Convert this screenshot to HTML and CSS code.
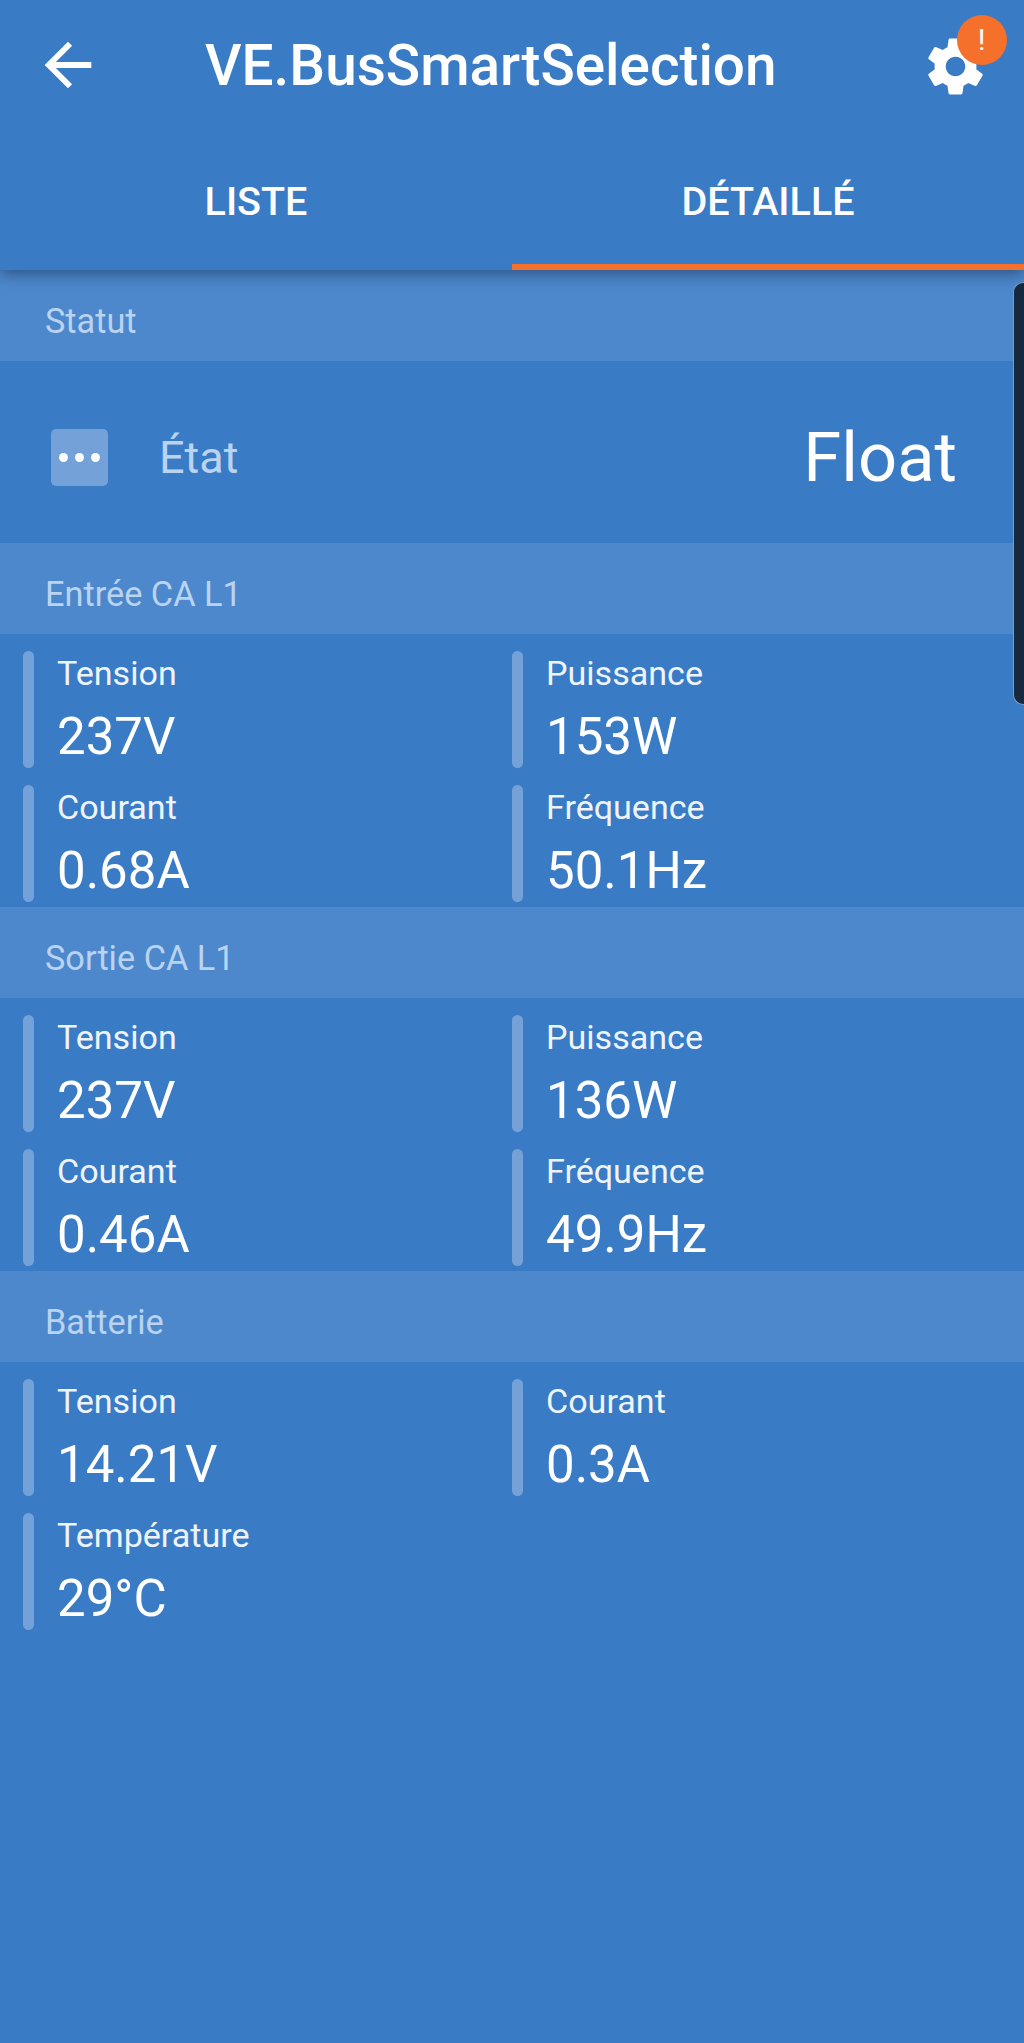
FILE: index.html
```html
<!DOCTYPE html>
<html lang="fr">

<head>
    <meta charset="UTF-8">
    <meta name="viewport" content="width=device-width, initial-scale=1.0">
    <title>VE.BusSmartSelection</title>
    <link rel="stylesheet" href="styles.css">
</head>

<body>
    <header class="appbar">
        <div class="toolbar">
            <svg class="back-icon" viewBox="0 0 24 24"><path d="M20 11H7.83l5.59-5.59L12 4l-8 8 8 8 1.41-1.41L7.83 13H20v-2z"/></svg>
            <h1 class="title">VE.BusSmartSelection</h1>
            <div class="settings">
                <svg class="gear-icon" viewBox="0 0 24 24"><path fill-rule="evenodd" d="M19.43 12.98c.04-.32.07-.64.07-.98s-.03-.66-.07-.98l2.11-1.65c.19-.15.24-.42.12-.64l-2-3.46c-.12-.22-.39-.3-.61-.22l-2.49 1c-.52-.4-1.08-.73-1.69-.98l-.38-2.65C14.46 2.18 14.25 2 14 2h-4c-.25 0-.46.18-.49.42l-.38 2.65c-.61.25-1.17.59-1.69.98l-2.49-1c-.23-.09-.49 0-.61.22l-2 3.46c-.13.22-.07.49.12.64l2.11 1.65c-.04.32-.07.65-.07.98s.03.66.07.98l-2.11 1.65c-.19.15-.24.42-.12.64l2 3.46c.12.22.39.3.61.22l2.49-1c.52.4 1.08.73 1.69.98l.38 2.65c.03.24.24.42.49.42h4c.25 0 .46-.18.49-.42l.38-2.65c.61-.25 1.17-.59 1.69-.98l2.49 1c.23.09.49 0 .61-.22l2-3.46c.12-.22.07-.49-.12-.64l-2.11-1.65zM12 15.5c-1.93 0-3.5-1.57-3.5-3.5s1.57-3.5 3.5-3.5 3.5 1.57 3.5 3.5-1.57 3.5-3.5 3.5z"/></svg>
                <span class="badge">!</span>
            </div>
        </div>
        <nav class="tabs">
            <div class="tab">LISTE</div>
            <div class="tab active">DÉTAILLÉ</div>
        </nav>
    </header>

    <main>
        <div class="section-title">Statut</div>
        <div class="status-row">
            <span class="status-icon"><i></i><i></i><i></i></span>
            <span class="status-label">État</span>
            <span class="status-value">Float</span>
        </div>

        <div class="section-title">Entrée CA L1</div>
        <div class="grid">
            <div class="cell"><div class="label">Tension</div><div class="value">237V</div></div>
            <div class="cell"><div class="label">Puissance</div><div class="value">153W</div></div>
            <div class="cell"><div class="label">Courant</div><div class="value">0.68A</div></div>
            <div class="cell"><div class="label">Fréquence</div><div class="value">50.1Hz</div></div>
        </div>

        <div class="section-title">Sortie CA L1</div>
        <div class="grid">
            <div class="cell"><div class="label">Tension</div><div class="value">237V</div></div>
            <div class="cell"><div class="label">Puissance</div><div class="value">136W</div></div>
            <div class="cell"><div class="label">Courant</div><div class="value">0.46A</div></div>
            <div class="cell"><div class="label">Fréquence</div><div class="value">49.9Hz</div></div>
        </div>

        <div class="section-title">Batterie</div>
        <div class="grid">
            <div class="cell"><div class="label">Tension</div><div class="value">14.21V</div></div>
            <div class="cell"><div class="label">Courant</div><div class="value">0.3A</div></div>
            <div class="cell"><div class="label">Température</div><div class="value">29°C</div></div>
        </div>
    </main>

    <div class="edge-handle"></div>
</body>

</html>
```

FILE: styles.css
```css
body {
    margin: 0;
    height: 2043px;
    overflow: hidden;
    font-family: Roboto, "Liberation Sans", sans-serif;
    background-color: #3a7bc6;
    color: #fff;
}

.appbar {
    position: relative;
    z-index: 1;
    box-shadow: 0 4px 14px rgba(20, 40, 70, 0.55);
    background-color: #3a7bc6;
}

.toolbar {
    display: flex;
    align-items: center;
    height: 130px;
    padding-left: 33px;
}

.back-icon {
    width: 70px;
    height: 70px;
    fill: #fff;
}

.title {
    margin: 0 0 0 102px;
    font-size: 56.7px;
    font-weight: 500;
    white-space: nowrap;
}

.settings {
    position: relative;
    margin: 2px 0 0 145px;
    width: 67px;
    height: 67px;
}

.gear-icon {
    width: 67px;
    height: 67px;
    fill: #fff;
}

.badge {
    position: absolute;
    top: -18px;
    left: 35px;
    width: 50px;
    height: 50px;
    border-radius: 50%;
    background-color: #f4702b;
    text-align: center;
    font-size: 30px;
    line-height: 50px;
}

.tabs {
    display: flex;
    height: 140px;
}

.tab {
    flex: 1;
    box-sizing: border-box;
    padding-top: 49px;
    text-align: center;
    font-size: 39.5px;
    font-weight: 500;
    line-height: 46px;
}

.tab.active {
    border-bottom: 6px solid #f4702b;
}

.section-title {
    height: 91px;
    padding-left: 45px;
    background-color: #4d88cd;
    color: #b9d3f0;
    font-size: 34.3px;
    line-height: 102px;
}

.status-row {
    display: flex;
    align-items: center;
    box-sizing: border-box;
    height: 182px;
    padding: 10px 67px 0 51px;
}

.status-icon {
    display: flex;
    align-items: center;
    justify-content: center;
    gap: 7px;
    width: 57px;
    height: 57px;
    border-radius: 5px;
    background-color: #74a2d8;
}

.status-icon i {
    width: 9px;
    height: 9px;
    border-radius: 50%;
    background-color: #fff;
}

.status-label {
    margin-left: 51px;
    flex: 1;
    color: #b9d3f0;
    font-size: 45px;
}

.status-value {
    font-size: 68.7px;
}

.grid {
    display: grid;
    grid-template-columns: 1fr 1fr;
    grid-auto-rows: 117px;
    row-gap: 17px;
    padding: 17px 0 5px;
}

.cell {
    position: relative;
    padding-left: 57px;
}

.cell:nth-child(even) {
    padding-left: 34px;
}

.cell::before {
    content: "";
    position: absolute;
    top: 0;
    bottom: 0;
    left: 23px;
    width: 11px;
    border-radius: 6px;
    background-color: #74a2d8;
}

.cell:nth-child(even)::before {
    left: 0;
}

.label {
    margin-top: 1px;
    font-size: 34.1px;
    line-height: 42px;
    color: #eef4fb;
}

.value {
    margin-top: 13px;
    font-size: 51px;
    line-height: 60px;
}

.edge-handle {
    position: absolute;
    top: 282px;
    right: 0;
    width: 10px;
    height: 421px;
    border: 1px solid #7f9cc0;
    border-right: none;
    border-radius: 10px 0 0 10px;
    background-color: #17293f;
}
```
